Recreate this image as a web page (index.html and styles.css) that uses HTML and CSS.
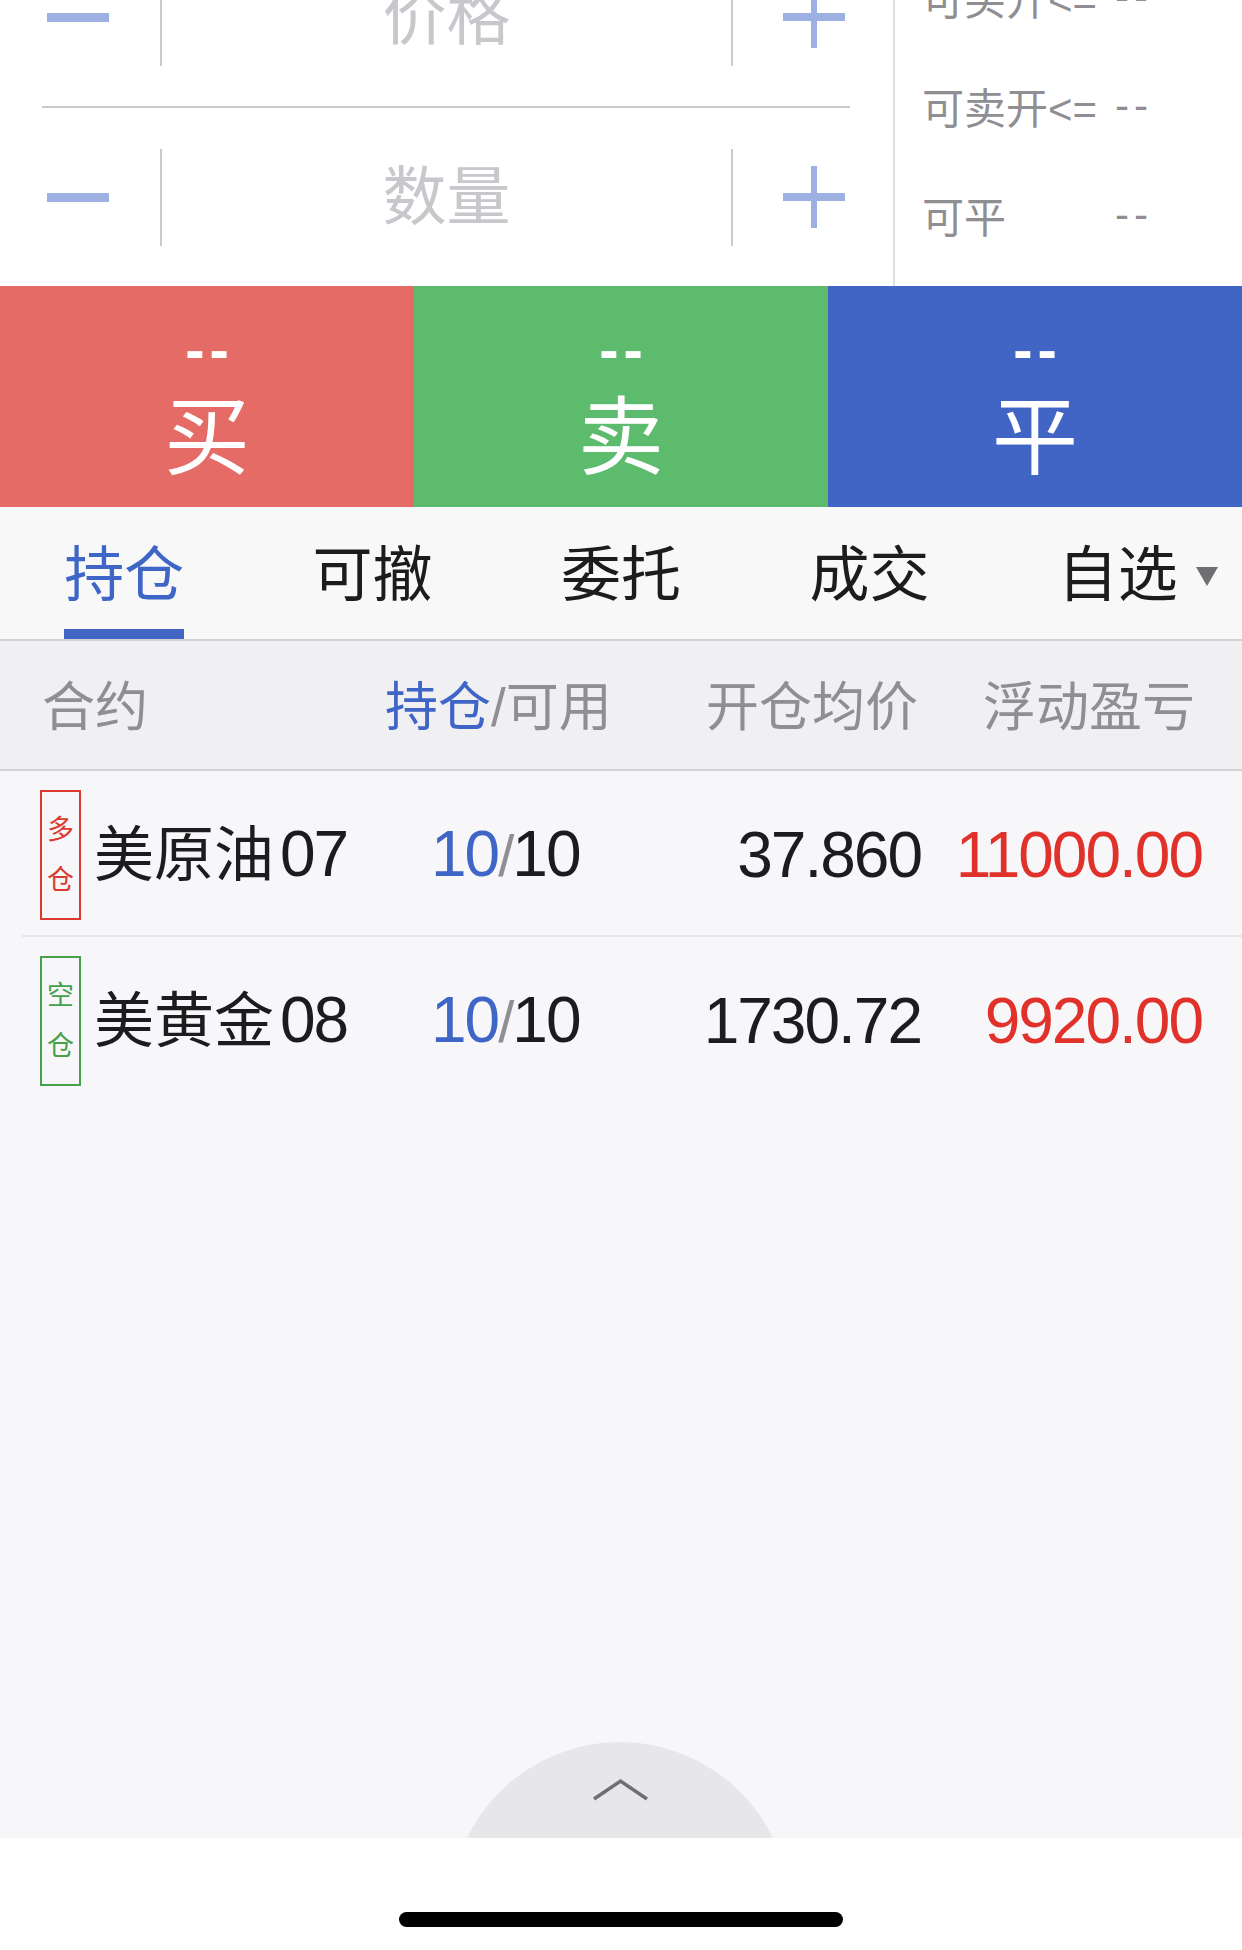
FILE: index.html
```html
<!DOCTYPE html>
<html lang="zh-CN">
<head>
<meta charset="utf-8">
<title>持仓</title>
<link rel="stylesheet" href="styles.css">
</head>
<body>
<div class="page">
  <section class="order-panel">
    <div class="inputs">
      <div class="inputs-inner">
        <div class="stepper">
          <div class="step"><span class="minus-bar"></span></div>
          <div class="field">价格</div>
          <div class="step"><span class="plus-icon"><span class="ph"></span><span class="pv"></span></span></div>
        </div>
        <div class="sep"></div>
        <div class="stepper">
          <div class="step"><span class="minus-bar"></span></div>
          <div class="field">数量</div>
          <div class="step"><span class="plus-icon"><span class="ph"></span><span class="pv"></span></span></div>
        </div>
      </div>
    </div>
    <div class="avail">
      <div class="avail-list">
        <span class="a-label">可买开&lt;=</span><span class="a-val">--</span>
        <span class="a-label">可卖开&lt;=</span><span class="a-val">--</span>
        <span class="a-label">可平</span><span class="a-val">--</span>
      </div>
    </div>
  </section>

  <section class="actions">
    <div class="act act-buy"><span class="act-price">--</span><span class="act-label">买</span></div>
    <div class="act act-sell"><span class="act-price">--</span><span class="act-label">卖</span></div>
    <div class="act act-close"><span class="act-price">--</span><span class="act-label">平</span></div>
  </section>

  <nav class="tabs">
    <div class="tab active"><span class="tab-label">持仓</span></div>
    <div class="tab"><span class="tab-label">可撤</span></div>
    <div class="tab"><span class="tab-label">委托</span></div>
    <div class="tab"><span class="tab-label">成交</span></div>
    <div class="tab"><span class="tab-label has-arrow">自选</span></div>
  </nav>

  <div class="table-head">
    <span class="h-name">合约</span>
    <span class="h-pos"><span class="blue">持仓</span>/可用</span>
    <span class="h-avg">开仓均价</span>
    <span class="h-pnl">浮动盈亏</span>
  </div>

  <div class="list">
    <div class="row row-sep">
      <div class="c-name"><span class="badge badge-long"><span>多</span><span>仓</span></span><span class="name">美原油<span class="num">07</span></span></div>
      <div class="c-pos num"><span class="blue">10</span><span class="slash">/</span>10</div>
      <div class="c-avg num">37.860</div>
      <div class="c-pnl num red">11000.00</div>
    </div>
    <div class="row">
      <div class="c-name"><span class="badge badge-short"><span>空</span><span>仓</span></span><span class="name">美黄金<span class="num">08</span></span></div>
      <div class="c-pos num"><span class="blue">10</span><span class="slash">/</span>10</div>
      <div class="c-avg num">1730.72</div>
      <div class="c-pnl num red">9920.00</div>
    </div>

    <div class="pull">
      <svg class="chev" width="61" height="26" viewBox="0 0 61 26"><path d="M4 22 L30.5 4 L57 22" fill="none" stroke="#6e6e73" stroke-width="3.5"/></svg>
    </div>
  </div>

  <div class="home"><span class="home-bar"></span></div>
</div>
</body>
</html>
```
FILE: styles.css
```css
* { box-sizing: border-box; }
html, body { margin: 0; padding: 0; }
body {
  width: 1242px;
  height: 1950px;
  overflow: hidden;
  background: #f7f7f9;
  font-family: "Liberation Sans", "Noto Sans CJK SC", sans-serif;
  color: #1c1c1e;
}
.page { display: flex; flex-direction: column; height: 1950px; }

/* order panel */
.order-panel { height: 286px; display: flex; background: #fff; overflow: hidden; }
.inputs { width: 895px; border-right: 2px solid #dedee2; }
.inputs-inner { margin-top: -72px; }
.stepper { height: 178px; display: grid; grid-template-columns: 160px 573px 160px; align-items: center; }
.step { display: flex; justify-content: center; align-items: center; }
.minus-bar { display: block; width: 62px; height: 9px; background: #9db0e2; margin-right: 4px; }
.plus-icon { position: relative; display: block; width: 62px; height: 62px; margin-left: 2px; }
.plus-icon .ph { position: absolute; left: 0; top: 27px; width: 62px; height: 8px; background: #9db0e2; }
.plus-icon .pv { position: absolute; left: 28px; top: 0; width: 6px; height: 62px; background: #9db0e2; }
.field {
  height: 97px; border-left: 2px solid #c9c9ce; border-right: 2px solid #c9c9ce;
  display: flex; align-items: center; justify-content: center;
  font-size: 64px; line-height: 97px; color: #c7c7cc;
}
.sep { margin-left: 42px; width: 808px; height: 2px; background: #c9c9ce; }

.avail { flex: 1; padding-left: 27px; }
.avail-list {
  margin-top: -58px;
  display: grid; grid-template-columns: 193px auto; grid-auto-rows: 109px; align-items: center;
  font-size: 42px; color: #8e8e93;
}
.a-val { letter-spacing: 5px; }

/* action buttons */
.actions { height: 221px; display: flex; }
.act { flex: 1; display: flex; flex-direction: column; align-items: center; color: #fff; }
.act-buy { background: #e56b66; }
.act-sell { background: #5dbb6d; }
.act-close { background: #4165c4; }
.act-price { font-size: 58px; font-weight: bold; line-height: 40px; height: 40px; margin-top: 44px; letter-spacing: 5px; padding-left: 5px; }
.act-label { font-size: 86px; line-height: 96px; margin-top: 20px; }

/* tabs */
.tabs { height: 134px; display: flex; background: #f8f8f8; border-bottom: 2px solid #d1d1d6; }
.tab { flex: 1; display: flex; justify-content: center; padding-top: 39px; }
.tab-label {
  position: relative; display: block; font-size: 60px; line-height: 60px; height: 93px;
  padding-bottom: 23px; border-bottom: 10px solid transparent; color: #1c1c1e;
}
.tab.active .tab-label { color: #3f66c6; border-bottom-color: #4265c4; }
.has-arrow::after {
  content: ""; position: absolute; left: 100%; margin-left: 18px; top: 21px;
  border-left: 11px solid transparent; border-right: 11px solid transparent; border-top: 19px solid #6e6e73;
}

/* table head */
.table-head {
  height: 130px; background: #f0f0f2; border-bottom: 2px solid #d1d1d6;
  display: grid; grid-template-columns: 347px 240px 294px 281px; align-items: center;
  padding: 0 40px 4px; font-size: 53px; color: #8e8e93;
}
.h-name { margin-left: 2px; }
.h-pos { margin-left: -2px; }
.h-avg { text-align: right; padding-right: 3px; }
.h-pnl { text-align: right; padding-right: 7px; }
.blue { color: #3f66c6; }
.red { color: #e0322a; }

/* list */
.list { flex: 1; position: relative; overflow: hidden; background: #f7f7f9; }
.row {
  position: relative; height: 166px;
  display: grid; grid-template-columns: 347px 240px 294px 281px; align-items: center;
  padding: 2px 40px 0;
}
.row-sep::after {
  content: ""; position: absolute; left: 22px; right: 0; bottom: 0; height: 2px; background: #e6e6ea;
}
.c-name { display: flex; align-items: center; }
.badge {
  width: 41px; height: 130px; border: 2px solid; display: flex; flex-direction: column;
  align-items: center; justify-content: center; font-size: 27px; line-height: 50px;
}
.badge-long { border-color: #dc3a30; color: #dc3a30; }
.badge-short { border-color: #46a04c; color: #46a04c; }
.name { margin-left: 13px; font-size: 60px; line-height: 80px; color: #1c1c1e; white-space: nowrap; }
.name .num { margin-left: 6px; }
.num { font-family: "Liberation Sans", sans-serif; font-size: 64px; letter-spacing: -2px; line-height: 80px; }
.c-pos { padding-left: 44px; }
.slash { color: #8e8e93; font-size: 58px; }
.c-avg { text-align: right; }
.c-pnl { text-align: right; }

.pull {
  position: absolute; left: 450px; top: 971px; width: 340px; height: 340px;
  border-radius: 50%; background: #e7e7ea;
}
.chev { position: absolute; left: 140px; top: 35px; }

/* home indicator */
.home { height: 112px; background: #fff; }
.home-bar { display: block; width: 444px; height: 15px; margin: 74px 0 0 399px; border-radius: 8px; background: #000; }
```
